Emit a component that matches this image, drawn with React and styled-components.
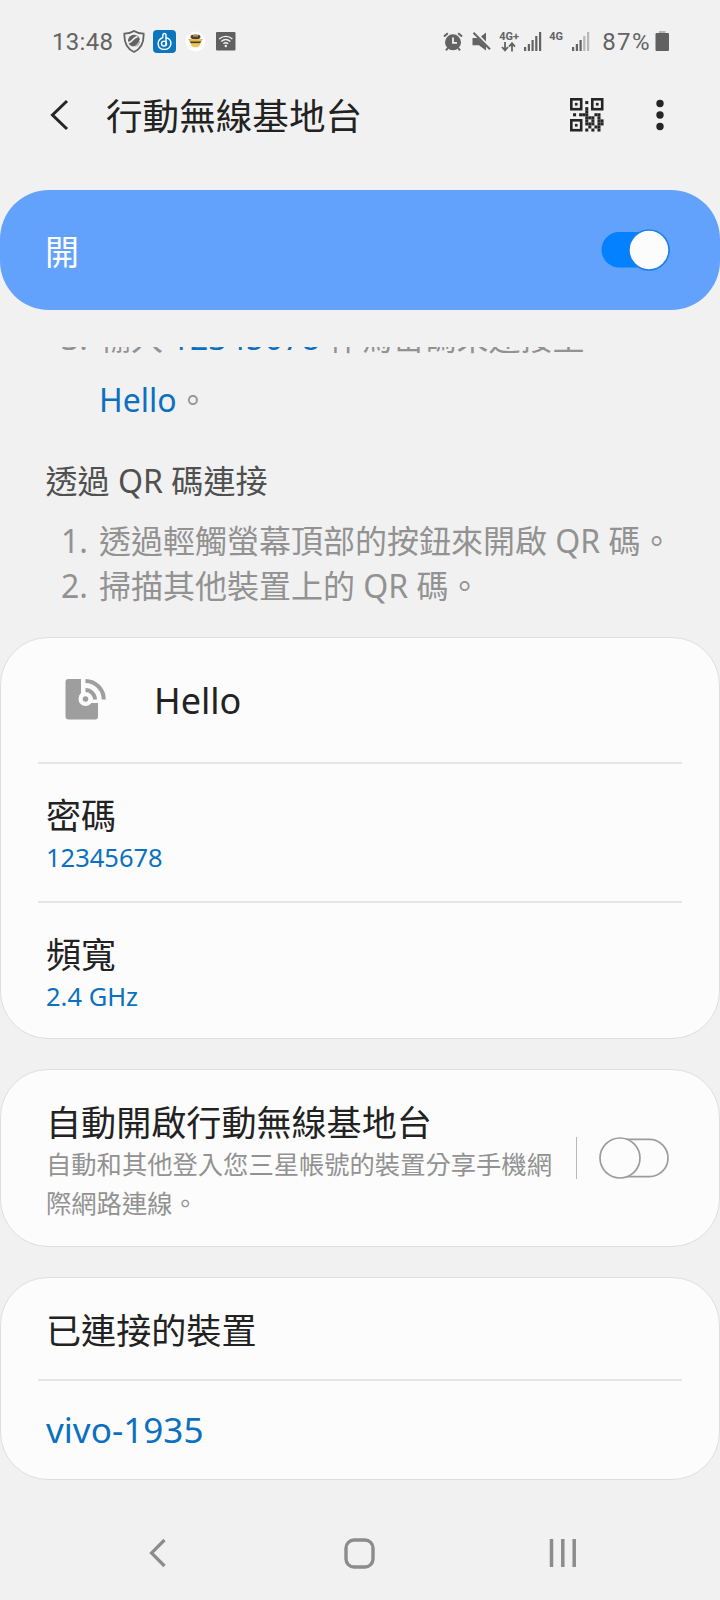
import React from 'react';
import styled, { createGlobalStyle } from 'styled-components';

const GlobalStyle = createGlobalStyle`
  * {
    box-sizing: border-box;
  }

  body {
    margin: 0;
    background-color: #f1f1f1;
    font-family: "Noto Sans", "Noto Sans CJK TC", sans-serif;
  }

  h1, h2, p, ol {
    margin: 0;
    padding: 0;
    font-weight: 400;
  }

  svg {
    display: block;
    flex: none;
  }
`;

const Screen = styled.div`
  width: 720px;
  height: 1600px;
  display: flex;
  flex-direction: column;
  overflow: hidden;
  background-color: #f1f1f1;
  color: #222;
`;

const StatusBar = styled.div`
  height: 82px;
  padding: 0 50px 0 52px;
  display: flex;
  justify-content: space-between;
  align-items: center;
  color: #636363;
  font-family: Roboto, sans-serif;
`;

const StatusGroup = styled.div`
  display: flex;
  align-items: center;
`;

const StatusText = styled.span`
  font-size: 24px;
  line-height: 30px;
  letter-spacing: ${props => props.$spacing || '0'};
  margin-right: ${props => props.$gap || '0'};
  padding-top: 2px;
`;

const StatusIcon = styled.svg`
  margin-right: ${props => props.$gap || 0}px;
`;

const NetworkLabel = styled.div`
  height: 20px;
  width: ${props => props.$width}px;
  margin-right: ${props => props.$gap}px;
  font-size: 11px;
  line-height: 11px;
  font-weight: 700;
  white-space: nowrap;
`;

const Header = styled.header`
  height: 108px;
  padding: 0 52px 42px 50px;
  display: flex;
  align-items: center;
`;

const Title = styled.h1`
  flex: 1;
  margin-left: 36px;
  padding-top: 2px;
  font-size: 36.6px;
  line-height: 48px;
`;

const Banner = styled.section`
  height: 120px;
  flex: none;
  padding: 0 50px 0 45px;
  border-radius: 49px;
  background-color: #62a2fc;
  color: #fff;
  display: flex;
  align-items: center;
  justify-content: space-between;
  font-size: 34px;
`;

const Guide = styled.section`
  height: 290px;
  flex: none;
  margin-top: 37px;
  overflow: hidden;
  font-size: 32px;
  color: #929292;
`;

const Step = styled.div`
  display: flex;
  padding-left: 61px;
  line-height: ${props => props.$line || 44.5}px;
  margin-top: ${props => props.$top || 0}px;
  white-space: nowrap;
`;

const StepNumber = styled.span`
  width: 38px;
`;

const GuideTitle = styled.h2`
  margin: 28px 0 16px 45.5px;
  font-size: 32.1px;
  line-height: 44px;
  color: #505050;
`;

const Accent = styled.span`
  color: #0c70c0;
  letter-spacing: ${props => props.$spacing || 0}px;
`;

const Card = styled.section`
  height: ${props => props.$height}px;
  flex: none;
  margin-bottom: 30px;
  border: 1px solid #dedede;
  border-radius: 48px;
  background-color: #fcfcfc;
`;

const Row = styled.div`
  height: ${props => props.$height}px;
  margin: 0 37px;
  padding: ${props => props.$top || 0}px 8px 0;
  border-bottom: ${props => (props.$last ? 'none' : '2px solid #e6e6e6')};
`;

const NetworkRow = styled(Row)`
  display: flex;
  align-items: center;
  padding: 0 26px;
`;

const NetworkName = styled.span`
  margin-left: 48px;
  font-size: 36px;
`;

const RowTitle = styled.p`
  font-size: 35.1px;
  line-height: 44px;
  color: ${props => (props.$accent ? '#0c70c0' : '#222')};
  white-space: nowrap;
`;

const RowValue = styled.p`
  font-size: 25.5px;
  line-height: 41px;
  color: #0c70c0;
`;

const SwitchRow = styled.div`
  height: 100%;
  padding: 30px 49px 0 45px;
  display: flex;
`;

const SwitchText = styled.div`
  width: 530px;
`;

const Description = styled.p`
  width: 510px;
  padding-top: 1px;
  font-size: 25.3px;
  line-height: 38.5px;
  color: #929292;
`;

const SwitchDivider = styled.div`
  width: 1px;
  height: 42px;
  margin: 37px 22px 0 0;
  background-color: #b8b8b8;
`;

const SwitchOff = styled.svg`
  margin-top: 37px;
`;

const NavBar = styled.nav`
  height: 90px;
  display: flex;
  align-items: center;
  padding: 0 144px 0 149px;
  margin-top: -2px;
`;

const HomeIcon = styled.svg`
  margin: 0 174px 0 177px;
`;

// 11 x 11 modules, the three corner finders are drawn apart
const QR_ROWS = [
  '...........',
  '.....#.....',
  '...........',
  '.....#.....',
  '.....#.....',
  '.#.###..##.',
  '.....###.#.',
  '.....#.#.##',
  '.....###.##',
  '......#.##.',
  '.....#.#.#.',
];

const QrFinder = ({ x, y }) => (
  <g>
    <rect x={x + 1.3} y={y + 1.3} width="9.9" height="9.9" fill="none" stroke="#252525" strokeWidth="2.6" />
    <rect x={x + 4.9} y={y + 4.9} width="2.7" height="2.7" />
  </g>
);

const QrIcon = () => (
  <svg width="34" height="34" viewBox="0 0 34 34" fill="#252525">
    <QrFinder x={0} y={0} />
    <QrFinder x={21} y={0} />
    <QrFinder x={0} y={21} />
    {QR_ROWS.map((row, r) => row.split('').map((cell, c) => (
      cell === '#' && <rect key={`${r}-${c}`} x={c * 3.05} y={r * 3.05} width="3.05" height="3.05" />
    )))}
  </svg>
);

const SignalIcon = ({ gap, weak }) => (
  <StatusIcon $gap={gap} width="18" height="19" viewBox="0 0 18 19" fill="currentColor">
    <rect x="0" y="15" width="2.2" height="4" />
    <rect x="3.8" y="12" width="2.2" height="7" />
    <rect x="7.5" y="8" width="2.2" height="11" />
    <rect x="11.2" y="4" width="2.2" height="15" opacity={weak ? 0.4 : 1} />
    <rect x="15" y="0" width="2.2" height="19" opacity={weak ? 0.4 : 1} />
  </StatusIcon>
);

const StatusLeft = () => (
  <StatusGroup>
    <StatusText $gap="9.5px" $spacing="0.3px">13:48</StatusText>
    <StatusIcon $gap={8} width="22" height="23" viewBox="0 0 22 23" fill="none" stroke="#636363">
      <path d="M11 1C8 3 5 3.6 1.4 3.6C1 12 3.4 18.5 11 22C18.6 18.5 21 12 20.6 3.6C17 3.6 14 3 11 1Z" strokeWidth="1.8" />
      <circle cx="11" cy="10.8" r="6" fill="#636363" stroke="none" />
      <path d="M5 12.5C8.5 13.6 9.5 7.6 14.5 6.6" stroke="#f1f1f1" strokeWidth="1.6" />
      <path d="M8 17.4C13 17 15.5 14 17 10" stroke="#f1f1f1" strokeWidth="1" />
    </StatusIcon>
    <StatusIcon $gap={9} width="23" height="23" viewBox="0 0 23 23" fill="none" stroke="#fff" strokeWidth="1.4">
      <rect width="23" height="23" rx="4" fill="#0b76bd" stroke="none" />
      <path d="M13 15.5V5C13 2.8 9.8 3 9.8 5.6V7.6C3.6 9.6 3.2 19.4 11.3 19.4C19.6 19.4 20 8.4 12.9 7.8" />
      <circle cx="11" cy="13.6" r="2.5" />
    </StatusIcon>
    <StatusIcon $gap={10} width="21" height="21" viewBox="0 0 21 21">
      <circle cx="10.5" cy="10.5" r="10" fill="#fff" />
      <ellipse cx="10.5" cy="6" rx="5" ry="2.4" fill="#4c4034" />
      <path d="M4 8.2H17C17 10.5 15.8 11.5 15.5 12H5.5C5 11 4 10.5 4 8.2Z" fill="#e8b83c" />
      <path d="M5 10.5H16L15 12.5H6Z" fill="#4a3a2c" />
      <path d="M5.6 12.5H15.4C14.8 15.6 12.6 16.3 10.5 16.3C8.4 16.3 6.2 15.6 5.6 12.5Z" fill="#edc456" />
      <path d="M8 4.8H13M3.5 8.5H5.5M15.5 8.5H17.5" stroke="#d6ae5a" strokeWidth="1.2" />
    </StatusIcon>
    <StatusIcon width="20" height="19" viewBox="0 0 20 19">
      <rect width="19.5" height="18.5" rx="1" fill="#606060" />
      <g fill="none" stroke="#f1f1f1" strokeWidth="1.4">
        <path d="M3.2 7C7 3.5 12.6 3.5 16.4 7" />
        <path d="M5.3 9.5C8 7.1 11.6 7.1 14.3 9.5" />
        <path d="M7.4 11.8C8.9 10.6 10.7 10.6 12.2 11.8" />
      </g>
      <circle cx="9.8" cy="14" r="1.2" fill="#f1f1f1" />
    </StatusIcon>
  </StatusGroup>
);

const StatusRight = () => (
  <StatusGroup>
    <StatusIcon $gap={9} width="20" height="19" viewBox="0 0 20 19">
      <circle cx="10" cy="10.3" r="8" fill="#636363" />
      <path d="M10 5.5V10.8H14" stroke="#f1f1f1" strokeWidth="1.8" fill="none" />
      <path d="M1 4.6L4.8 1.2M19 4.6L15.2 1.2M4.8 16L3 18.4M15.2 16L17 18.4" stroke="#636363" strokeWidth="2" />
    </StatusIcon>
    <StatusIcon $gap={8} width="19" height="19" viewBox="0 0 19 19" fill="#636363">
      <path d="M0.5 6H5.5L14 14.5V18.5L7 13.2H0.5Z" />
      <path d="M14 0.5V9.4L9 4.5Z" />
      <path d="M1.5 0.8L18 17.3" stroke="#636363" strokeWidth="2" />
    </StatusIcon>
    <NetworkLabel $width={19} $gap={6}>
      4G+
      <svg width="19" height="10" viewBox="0 0 19 10" fill="none" stroke="#636363" strokeWidth="1.8">
        <path d="M6 0V8M3 5L6 8.4L9 5M13 9.5V1.5M10 4.6L13 1.2L16 4.6" />
      </svg>
    </NetworkLabel>
    <SignalIcon gap={7} />
    <NetworkLabel $width={15} $gap={8}>4G</NetworkLabel>
    <SignalIcon gap={12} weak />
    <StatusText $gap="4px" $spacing="1.4px">87%</StatusText>
    <StatusIcon width="15" height="20" viewBox="0 0 15 20">
      <rect x="4" width="6.5" height="3" fill="#b4b4b4" />
      <rect x="0.5" y="2" width="13.5" height="18" rx="1" fill="#606060" />
    </StatusIcon>
  </StatusGroup>
);

const HotspotIcon = () => (
  <svg width="42" height="44" viewBox="-1 0 42 44">
    <rect x="0.5" y="1" width="32.5" height="40.5" rx="3" fill="#9e9e9e" />
    <path d="M16 0H42V25H26A7 7 0 1 1 16 15Z" fill="#fcfcfc" />
    <circle cx="20.5" cy="21" r="7" fill="#fcfcfc" />
    <circle cx="20.5" cy="21" r="2.8" fill="#9e9e9e" />
    <g fill="none" stroke="#9e9e9e" strokeWidth="4">
      <path d="M20.5 12A9.6 9.6 0 0 1 30 21.5" />
      <path d="M20.5 3A18.5 18.5 0 0 1 38.8 21.5" />
    </g>
  </svg>
);

const App = () => (
  <>
    <GlobalStyle />
    <Screen>
      <StatusBar>
        <StatusLeft />
        <StatusRight />
      </StatusBar>
      <Header>
        <svg width="20" height="32" viewBox="0 0 20 32">
          <path d="M17 2L2.5 16L17 30" fill="none" stroke="#252525" strokeWidth="3" />
        </svg>
        <Title>行動無線基地台</Title>
        <QrIcon />
        <svg width="64" height="32" viewBox="0 0 64 32" fill="#252525">
          <circle cx="56" cy="4.5" r="3.7" />
          <circle cx="56" cy="16" r="3.7" />
          <circle cx="56" cy="27.5" r="3.7" />
        </svg>
      </Header>
      <Banner>
        <span>開</span>
        <svg width="69" height="42" viewBox="0 0 69 42">
          <rect x="0.5" y="3" width="68" height="35.5" rx="17.7" fill="#0381fe" />
          <circle cx="48" cy="21" r="20" fill="#fcfcfc" stroke="#1a7fe8" strokeWidth="1.5" />
        </svg>
      </Banner>

      <Guide>
        <Step $line={62} $top={-40}>
          <StepNumber>3.</StepNumber>
          <p>
            輸入 <Accent $spacing={0.3}>12345678</Accent> 作為密碼來連接至
            <br />
            <Accent>Hello</Accent>。
          </p>
        </Step>
        <GuideTitle>透過 QR 碼連接</GuideTitle>
        <Step>
          <StepNumber>1.</StepNumber>
          <p>透過輕觸螢幕頂部的按鈕來開啟 QR 碼。</p>
        </Step>
        <Step>
          <StepNumber>2.</StepNumber>
          <p>掃描其他裝置上的 QR 碼。</p>
        </Step>
      </Guide>

      <Card $height={402}>
        <NetworkRow $height={126}>
          <HotspotIcon />
          <NetworkName>Hello</NetworkName>
        </NetworkRow>
        <Row $height={139} $top={29}>
          <RowTitle>密碼</RowTitle>
          <RowValue>12345678</RowValue>
        </Row>
        <Row $height={135} $top={29} $last>
          <RowTitle>頻寬</RowTitle>
          <RowValue>2.4 GHz</RowValue>
        </Row>
      </Card>

      <Card $height={178}>
        <SwitchRow>
          <SwitchText>
            <RowTitle>自動開啟行動無線基地台</RowTitle>
            <Description>自動和其他登入您三星帳號的裝置分享手機網際網路連線。</Description>
          </SwitchText>
          <SwitchDivider />
          <SwitchOff width="71" height="42" viewBox="0 0 71 42" fill="#fcfcfc" stroke="#9c9c9c" strokeWidth="1.7">
            <rect x="3" y="2.3" width="66" height="37.4" rx="18.7" />
            <circle cx="21" cy="21" r="20" />
          </SwitchOff>
        </SwitchRow>
      </Card>

      <Card $height={203}>
        <Row $height={103} $top={30}>
          <RowTitle>已連接的裝置</RowTitle>
        </Row>
        <Row $height={97} $top={26} $last>
          <RowTitle $accent>vivo-1935</RowTitle>
        </Row>
      </Card>

      <NavBar>
        <svg width="18" height="30" viewBox="0 0 18 30">
          <path d="M15.5 2L2.5 15L15.5 28" fill="none" stroke="#8c8c8c" strokeWidth="3.2" />
        </svg>
        <HomeIcon width="31" height="31" viewBox="0 0 31 31">
          <rect x="2" y="2" width="27" height="27" rx="8" fill="none" stroke="#8c8c8c" strokeWidth="3.4" />
        </HomeIcon>
        <svg width="28" height="28" viewBox="0 0 28 28" stroke="#8c8c8c" strokeWidth="3.5">
          <path d="M2.5 0V28M13.8 0V28M25.2 0V28" />
        </svg>
      </NavBar>
    </Screen>
  </>
);

export default App;
